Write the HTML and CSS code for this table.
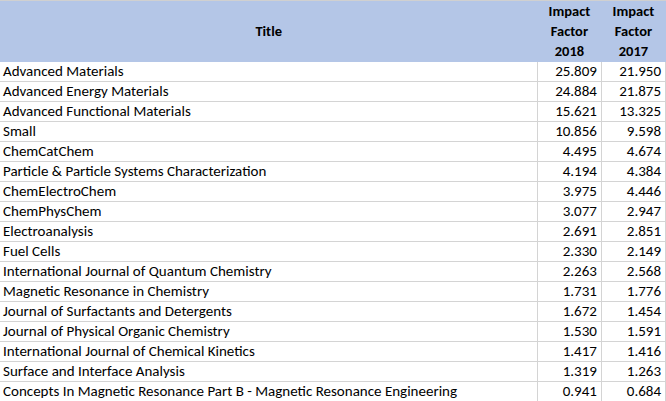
FILE: index.html
```html
<!DOCTYPE html>
<html>
<head>
<meta charset="utf-8">
<link rel="stylesheet" href="styles.css">
</head>
<body>
<table class="sheet">
  <thead>
    <tr>
      <th class="title-col">Title</th>
      <th class="num-col">Impact<br>Factor<br>2018</th>
      <th class="num-col">Impact<br>Factor<br>2017</th>
    </tr>
  </thead>
  <tbody>
    <tr><td>Advanced Materials</td><td class="num">25.809</td><td class="num">21.950</td></tr>
    <tr><td>Advanced Energy Materials</td><td class="num">24.884</td><td class="num">21.875</td></tr>
    <tr><td>Advanced Functional Materials</td><td class="num">15.621</td><td class="num">13.325</td></tr>
    <tr><td>Small</td><td class="num">10.856</td><td class="num">9.598</td></tr>
    <tr><td>ChemCatChem</td><td class="num">4.495</td><td class="num">4.674</td></tr>
    <tr><td>Particle &amp; Particle Systems Characterization</td><td class="num">4.194</td><td class="num">4.384</td></tr>
    <tr><td>ChemElectroChem</td><td class="num">3.975</td><td class="num">4.446</td></tr>
    <tr><td>ChemPhysChem</td><td class="num">3.077</td><td class="num">2.947</td></tr>
    <tr><td>Electroanalysis</td><td class="num">2.691</td><td class="num">2.851</td></tr>
    <tr><td>Fuel Cells</td><td class="num">2.330</td><td class="num">2.149</td></tr>
    <tr><td>International Journal of Quantum Chemistry</td><td class="num">2.263</td><td class="num">2.568</td></tr>
    <tr><td>Magnetic Resonance in Chemistry</td><td class="num">1.731</td><td class="num">1.776</td></tr>
    <tr><td>Journal of Surfactants and Detergents</td><td class="num">1.672</td><td class="num">1.454</td></tr>
    <tr><td>Journal of Physical Organic Chemistry</td><td class="num">1.530</td><td class="num">1.591</td></tr>
    <tr><td>International Journal of Chemical Kinetics</td><td class="num">1.417</td><td class="num">1.416</td></tr>
    <tr><td>Surface and Interface Analysis</td><td class="num">1.319</td><td class="num">1.263</td></tr>
    <tr><td>Concepts In Magnetic Resonance Part B - Magnetic Resonance Engineering</td><td class="num">0.941</td><td class="num">0.684</td></tr>
  </tbody>
</table>
</body>
</html>
```
FILE: styles.css
```css
html, body {
  margin: 0;
  padding: 0;
  background: #ffffff;
}
body {
  font-family: "Carlito", Lato, "Liberation Sans", sans-serif;
  font-size: 15px;
  color: #000000;
}
.sheet {
  border-collapse: collapse;
  table-layout: fixed;
  width: 666px;
  border-top: 1px solid #d0d0d0;
}
.sheet th {
  background: #b4c6e7;
  font-weight: bold;
  font-size: 14.5px;
  text-align: center;
  vertical-align: middle;
  padding: 0 0 1px 0;
  height: 59px;
  line-height: 20px;
}
.title-col { width: 537px; }
.num-col { width: 64px; }
.sheet td {
  height: 19px;
  line-height: 19px;
  padding: 0 0 0 3px;
  white-space: nowrap;
  border-bottom: 1px solid #d4d4d4;
  border-right: 1px solid #d4d4d4;
}
.sheet td.num {
  text-align: right;
  padding: 0 4px 0 0;
}
```
